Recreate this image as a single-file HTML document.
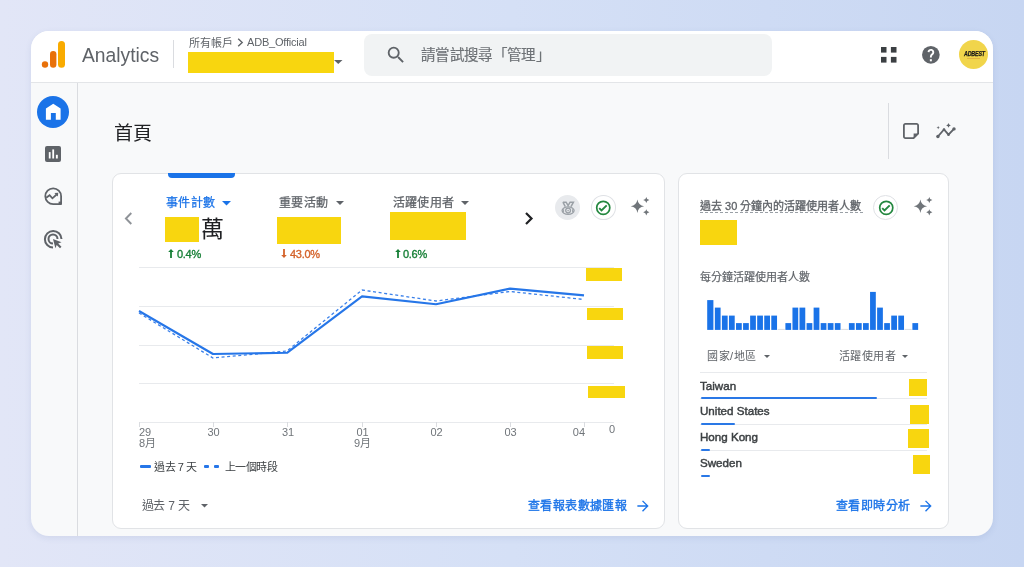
<!DOCTYPE html>
<html lang="zh-TW">
<head>
<meta charset="utf-8">
<style>
*{box-sizing:border-box;margin:0;padding:0}
html,body{width:1024px;height:567px;overflow:hidden}
body{font-family:"Liberation Sans",sans-serif;background:linear-gradient(90deg,#e2e6f7 0%,#d5e0f6 50%,#c7d6f2 100%);position:relative;color:#202124}
#frame{position:absolute;left:31px;top:31px;width:962px;height:505px;border-radius:18px;background:#f8f9fa;overflow:hidden;box-shadow:0 2px 6px rgba(60,80,140,.10)}
#hdr{position:absolute;left:0;top:0;width:962px;height:52px;background:#fff;border-bottom:1px solid #e3e5e8}
#side{position:absolute;left:0;top:52px;width:47px;height:454px;border-right:1px solid #dadce0}
.t{position:absolute;white-space:nowrap;line-height:1}
.yl{position:absolute;background:#f8d60f}
.card{position:absolute;background:#fff;border:1px solid #e1e3e6;border-radius:9px}
svg{position:absolute;overflow:visible}
</style>
</head>
<body>
<div id="root" style="position:absolute;left:0;top:0;width:1024px;height:567px;will-change:transform">
<div id="frame">
  <div id="hdr"></div>
  <div id="side"></div>
</div>

<!-- logo -->
<svg style="left:40px;top:40px" width="28" height="30" viewBox="0 0 28 30">
  <circle cx="5" cy="24.5" r="3.2" fill="#e8710a"/>
  <rect x="10" y="11" width="6.4" height="16.8" rx="3.2" fill="#e8710a"/>
  <rect x="18" y="1" width="7" height="26.8" rx="3.5" fill="#f9ab00"/>
</svg>
<div class="t" style="left:82px;top:46px;font-size:19.3px;color:#5f6368">Analytics</div>
<div style="position:absolute;left:173px;top:40px;width:1px;height:28px;background:#dadce0"></div>
<div class="t" style="left:189px;top:38px;font-size:11px;color:#5f6368">所有帳戶</div><svg style="left:236.5px;top:37.5px" width="7" height="9" viewBox="0 0 7 9"><path d="M1.2 0.8L5.2 4.5 1.2 8.2" fill="none" stroke="#5f6368" stroke-width="1.4"/></svg><div class="t" style="left:247px;top:37px;font-size:11px;letter-spacing:-0.2px;color:#5f6368">ADB_Official</div>
<div class="yl" style="left:188px;top:52px;width:146px;height:21px"></div>
<svg style="left:334px;top:60px" width="9" height="5"><path d="M0 0h8.5L4.25 4z" fill="#5f6368"/></svg>

<!-- search -->
<div style="position:absolute;left:364px;top:33.5px;width:408px;height:42.5px;border-radius:8px;background:#f1f3f4"></div>
<svg style="left:385.1px;top:43.9px" width="22" height="22" viewBox="0 0 24 24"><path fill="#5f6368" d="M15.5 14h-.79l-.28-.27A6.47 6.47 0 0 0 16 9.5 6.5 6.5 0 1 0 9.5 16c1.61 0 3.09-.59 4.23-1.57l.27.28v.79l5 4.99L20.49 19l-4.99-5zm-6 0C7.01 14 5 11.99 5 9.5S7.01 5 9.5 5 14 7.01 14 9.5 11.99 14 9.5 14z"/></svg>
<div class="t" style="left:421px;top:48px;font-size:14.5px;letter-spacing:0.35px;color:#6f7377;-webkit-text-stroke:0.2px #6f7377">請嘗試搜尋「管理」</div>

<!-- header right icons -->
<svg style="left:880.8px;top:46.8px" width="16" height="16" viewBox="0 0 16 16" fill="#3c4043">
  <rect x="0" y="0" width="5.5" height="5.6"/><rect x="9.9" y="0" width="5.6" height="5.6"/>
  <rect x="0" y="9.9" width="5.5" height="5.7"/><rect x="9.9" y="9.9" width="5.6" height="5.7"/>
</svg>
<svg style="left:922.2px;top:46px" width="18" height="18" viewBox="0 0 18 18"><circle cx="8.85" cy="8.85" r="8.85" fill="#5f6368"/><path d="M6.5 6.05A2.4 2.4 0 1 1 11.05 7.3C10.55 8.1 9.85 8.5 9.35 9.1 9 9.55 8.85 10 8.85 11.4" fill="none" stroke="#fff" stroke-width="1.9"/><rect x="7.85" y="13.2" width="2" height="2.1" fill="#fff"/></svg>
<div style="position:absolute;left:959px;top:40px;width:29px;height:29px;border-radius:50%;background:#f1d54b"></div>
<div class="t" style="left:963.8px;top:50.5px;font-size:6.5px;font-weight:bold;font-style:italic;color:#1a1a1a;-webkit-text-stroke:0.25px #1a1a1a;letter-spacing:-0.2px;transform:scaleX(0.82);transform-origin:0 0">ADBEST</div><div style="position:absolute;left:967px;top:58px;width:13px;height:0.6px;background:#d08a3a;opacity:.45"></div>

<!-- sidebar icons -->
<div style="position:absolute;left:37px;top:95.5px;width:32px;height:32px;border-radius:50%;background:#1a73e8"></div>
<svg style="left:45px;top:103px" width="17" height="17" viewBox="0 0 17 17"><path fill="#fff" d="M8.25 0.7L15.6 5.6V16.7H10.8V10H5.9V16.7H0.9V5.6z"/></svg>
<svg style="left:45px;top:146px" width="16" height="16" viewBox="0 0 16 16"><rect width="16" height="16" rx="2" fill="#5f6368"/><rect x="3.8" y="6.1" width="1.8" height="6.4" fill="#fff"/><rect x="7.3" y="3.4" width="1.8" height="9.1" fill="#fff"/><rect x="10.9" y="8.8" width="1.9" height="3.7" fill="#fff"/></svg>
<svg style="left:44px;top:186px" width="20" height="20" viewBox="0 0 20 20" fill="none" stroke="#5f6368" stroke-width="1.8">
  <path d="M17.1 18.1H9.3A7.9 7.9 0 1 1 17.1 10.2z" stroke-linejoin="round"/>
  <path d="M2.2 11.8L5.6 9.2 8.4 12.3 12.6 8.5" stroke-linejoin="miter"/>
  <path d="M10.4 7.1L14.2 6.8 13.9 10.6z" fill="#5f6368" stroke="none"/>
  <rect x="14.6" y="15.6" width="2.6" height="2.6" fill="#5f6368" stroke="none"/>
</svg>
<svg style="left:44px;top:230px" width="19" height="19" viewBox="0 0 19 19" fill="none" stroke="#5f6368" stroke-width="2">
  <path d="M9 17.5A8.3 8.3 0 1 1 17.5 9"/>
  <path d="M9 13.5A4.5 4.5 0 1 1 13.5 9"/>
  <path d="M9 9l8.5 3.2-3.3 1.3 3.3 3.3-1.5 1.5-3.3-3.3-1.3 3.3z" fill="#5f6368" stroke="none"/>
</svg>

<!-- page title -->
<div class="t" style="left:114px;top:124px;font-size:19px;color:#202124">首頁</div>
<div style="position:absolute;left:888px;top:103px;width:1px;height:56px;background:#dadce0"></div>
<svg style="left:902.8px;top:122.8px" width="16" height="16" viewBox="0 0 16 16"><path d="M2.4 0.9h11.2a1.5 1.5 0 0 1 1.5 1.5V10.6l-4.5 4.5H2.4A1.5 1.5 0 0 1 0.9 13.6V2.4A1.5 1.5 0 0 1 2.4 0.9z" fill="none" stroke="#5f6368" stroke-width="1.8"/><path d="M15.1 10.6h-4.5v4.5z" fill="#5f6368"/></svg>
<svg style="left:936px;top:122px" width="21" height="17" viewBox="0 0 21 17" fill="#5f6368">
  <path d="M1.9 14.5L8 7.5 12.5 12.7 18 6.9" fill="none" stroke="#5f6368" stroke-width="1.9" stroke-linejoin="round"/>
  <circle cx="1.9" cy="14.5" r="1.7"/><circle cx="8" cy="7.5" r="1.3"/><circle cx="12.5" cy="12.7" r="1.3"/><circle cx="18" cy="6.9" r="1.7"/>
  <path d="M12.5 1.1Q12.8 3.1 14.8 3.4 12.8 3.7 12.5 5.7 12.2 3.7 10.2 3.4 12.2 3.1 12.5 1.1z"/>
  <path d="M2.2 3.9Q2.45 5.35 3.9 5.6 2.45 5.85 2.2 7.3 1.95 5.85 0.5 5.6 1.95 5.35 2.2 3.9z"/>
</svg>

<!-- left card -->
<div class="card" style="left:112px;top:173px;width:553px;height:356px"></div>
<div style="position:absolute;left:168px;top:173px;width:67px;height:5px;background:#1a73e8;border-radius:0 0 4px 4px"></div>
<svg style="left:124px;top:212px" width="9" height="13" viewBox="0 0 9 13"><path d="M7.3 1L1.9 6.5 7.3 12" fill="none" stroke="#8f9398" stroke-width="1.9"/></svg>
<svg style="left:524px;top:212px" width="10" height="13" viewBox="0 0 10 13"><path d="M2 1l5.5 5.5L2 12" fill="none" stroke="#202124" stroke-width="2.2"/></svg>

<div class="t" style="left:166px;top:197px;font-size:12px;letter-spacing:0.3px;color:#1a73e8;-webkit-text-stroke:0.25px #1a73e8">事件計數</div>
<svg style="left:222px;top:201px" width="10" height="5"><path d="M0 0h9L4.5 4.5z" fill="#1a73e8"/></svg>
<div class="yl" style="left:165px;top:217px;width:34px;height:25px"></div>
<div class="t" style="left:201px;top:218px;font-size:23px;color:#202124">萬</div>
<svg style="left:168px;top:249px" width="6" height="9" viewBox="0 0 6 9"><path d="M3 0L5.8 3H3.9V9H2.1V3H0.2z" fill="#188038"/></svg><div class="t" style="left:177px;top:249px;font-size:11px;letter-spacing:-0.3px;color:#188038;-webkit-text-stroke:0.35px #188038">0.4%</div>

<div class="t" style="left:279px;top:197px;font-size:12px;letter-spacing:0.3px;color:#5f6368;-webkit-text-stroke:0.25px #5f6368">重要活動</div>
<svg style="left:336px;top:201px" width="10" height="5"><path d="M0 0h8L4 4z" fill="#5f6368"/></svg>
<div class="yl" style="left:277px;top:217px;width:64px;height:27px"></div>
<svg style="left:280.5px;top:248.5px" width="6" height="9" viewBox="0 0 6 9"><path d="M3 9L5.8 6H3.9V0H2.1V6H0.2z" fill="#d4632b"/></svg><div class="t" style="left:290px;top:249px;font-size:11px;letter-spacing:-0.3px;color:#d4632b;-webkit-text-stroke:0.35px #d4632b">43.0%</div>

<div class="t" style="left:393px;top:197px;font-size:12px;letter-spacing:0.2px;color:#5f6368;-webkit-text-stroke:0.25px #5f6368">活躍使用者</div>
<svg style="left:461px;top:201px" width="10" height="5"><path d="M0 0h8L4 4z" fill="#5f6368"/></svg>
<div class="yl" style="left:390px;top:212px;width:76px;height:28px"></div>
<svg style="left:394.5px;top:249px" width="6" height="9" viewBox="0 0 6 9"><path d="M3 0L5.8 3H3.9V9H2.1V3H0.2z" fill="#188038"/></svg><div class="t" style="left:403px;top:249px;font-size:11px;letter-spacing:-0.3px;color:#188038;-webkit-text-stroke:0.35px #188038">0.6%</div>

<div style="position:absolute;left:555px;top:195px;width:25px;height:25px;border-radius:50%;background:#e8eaed"></div>
<svg style="left:560.5px;top:200.5px" width="15" height="15" viewBox="0 0 15 15" fill="none" stroke="#9aa0a6" stroke-width="1.3"><path d="M1.9 1.2h3.2l2 3.4 2-3.4h3.3l-2.4 4.4M1.9 1.2l2.4 4.4" stroke-width="1.5"/><ellipse cx="7.1" cy="9.6" rx="6" ry="3.7"/><circle cx="7.1" cy="9.6" r="2.4"/><circle cx="7.1" cy="9.6" r="0.8" fill="#9aa0a6" stroke="none"/><path d="M2.6 8.2v2.8M11.6 8.2v2.8" stroke-width="1"/></svg>
<div style="position:absolute;left:590.8px;top:195.3px;width:24.8px;height:24.6px;border-radius:50%;background:#fff;border:1px solid #dfe1e5"></div>
<svg style="left:595px;top:200px" width="16" height="16" viewBox="0 0 16 16" fill="none" stroke="#23873f" stroke-width="1.7"><circle cx="8.25" cy="7.85" r="6.55"/><path d="M4.2 8.2l2.3 2.3 5.2-5.2" stroke-width="1.9"/></svg>
<svg style="left:631px;top:196.9px" width="20" height="20" viewBox="0 0 20 20" fill="#70757a"><path d="M6.40 2.50Q7.20 8.40 13.10 9.20Q7.20 10.00 6.40 15.90Q5.60 10.00 -0.30 9.20Q5.60 8.40 6.40 2.50ZM15.30 -0.10Q15.67 2.63 18.40 3.00Q15.67 3.37 15.30 6.10Q14.93 3.37 12.20 3.00Q14.93 2.63 15.30 -0.10ZM15.30 12.20Q15.67 14.93 18.40 15.30Q15.67 15.67 15.30 18.40Q14.93 15.67 12.20 15.30Q14.93 14.93 15.30 12.20Z"/></svg>

<!-- chart -->
<svg style="left:0;top:0" width="1024" height="567">
  <g stroke="#e8eaed" stroke-width="1">
    <line x1="139" y1="267.5" x2="614" y2="267.5"/>
    <line x1="139" y1="306.5" x2="614" y2="306.5"/>
    <line x1="139" y1="345.5" x2="614" y2="345.5"/>
    <line x1="139" y1="383.5" x2="614" y2="383.5"/>
    <line x1="139" y1="422.5" x2="614" y2="422.5"/>
  </g>
  <g stroke="#dadce0" stroke-width="1">
    <line x1="139.5" y1="422" x2="139.5" y2="427"/>
    <line x1="213.5" y1="422" x2="213.5" y2="427"/>
    <line x1="287.5" y1="422" x2="287.5" y2="427"/>
    <line x1="362.5" y1="422" x2="362.5" y2="427"/>
    <line x1="436.5" y1="422" x2="436.5" y2="427"/>
    <line x1="510.5" y1="422" x2="510.5" y2="427"/>
    <line x1="584.5" y1="422" x2="584.5" y2="427"/>
  </g>
  <polyline points="139,313 213,358 287,351 362,290 436,301 510,291.5 584,299.5" fill="none" stroke="#3a80ea" stroke-width="1.3" stroke-dasharray="3 2.6"/>
  <polyline points="139,311 213,354 287,352.8 362,296.4 436,304.2 510,288.6 584,295.4" fill="none" stroke="#2676e8" stroke-width="2.1" stroke-linejoin="round"/>
</svg>
<div class="yl" style="left:586px;top:268px;width:36px;height:13px"></div>
<div class="yl" style="left:587px;top:308px;width:36px;height:12px"></div>
<div class="yl" style="left:587px;top:346px;width:36px;height:13px"></div>
<div class="yl" style="left:588px;top:386px;width:37px;height:12px"></div>
<div class="t" style="left:609px;top:424px;font-size:11px;color:#70757a">0</div>

<div class="t" style="left:139px;top:427px;font-size:11px;color:#70757a;line-height:11px">29<br>8月</div>
<div class="t" style="left:207.5px;top:427px;font-size:11px;color:#70757a">30</div>
<div class="t" style="left:282px;top:427px;font-size:11px;color:#70757a">31</div>
<div class="t" style="left:354px;top:427px;font-size:11px;color:#70757a;line-height:11px;text-align:center">01<br>9月</div>
<div class="t" style="left:430.5px;top:427px;font-size:11px;color:#70757a">02</div>
<div class="t" style="left:504.5px;top:427px;font-size:11px;color:#70757a">03</div>
<div class="t" style="left:572.8px;top:427px;font-size:11px;color:#70757a">04</div>

<div style="position:absolute;left:139.5px;top:465px;width:11px;height:3px;background:#2676e8;border-radius:1px"></div>
<div class="t" style="left:154px;top:462px;font-size:11px;letter-spacing:-0.4px;color:#3c4043">過去 7 天</div>
<div style="position:absolute;left:203.5px;top:465px;width:5.5px;height:3px;background:#2676e8;border-radius:1px"></div>
<div style="position:absolute;left:213.5px;top:465px;width:5.5px;height:3px;background:#2676e8;border-radius:1px"></div>
<div class="t" style="left:224.5px;top:462px;font-size:11px;letter-spacing:-0.4px;color:#3c4043">上一個時段</div>

<div class="t" style="left:141.5px;top:500px;font-size:12px;letter-spacing:-0.2px;color:#5f6368">過去 7 天</div>
<svg style="left:201px;top:504px" width="8" height="4"><path d="M0 0h7L3.5 3.5z" fill="#5f6368"/></svg>
<div class="t" style="left:528px;top:500px;font-size:12px;letter-spacing:0.4px;color:#1a73e8;-webkit-text-stroke:0.35px #1a73e8">查看報表數據匯報</div>
<svg style="left:636.5px;top:499.5px" width="12" height="12" viewBox="0 0 16 16"><path d="M8 0.5L6.7 1.8l5.3 5.3H0.5v1.8H12l-5.3 5.3L8 15.5 15.5 8z" fill="#1a73e8"/></svg>

<!-- right card -->
<div class="card" style="left:678px;top:173px;width:271px;height:356px"></div>
<div class="t" style="left:700px;top:200.5px;font-size:11px;color:#5f6368;-webkit-text-stroke:0.3px #5f6368">過去 30 分鐘內的活躍使用者人數</div>
<div style="position:absolute;left:700px;top:212px;width:163px;height:0;border-top:1px dashed #9aa0a6"></div>
<div class="yl" style="left:700px;top:220px;width:37px;height:25px"></div>
<div style="position:absolute;left:873.4px;top:195.2px;width:24.9px;height:24.9px;border-radius:50%;background:#fff;border:1px solid #dfe1e5"></div>
<svg style="left:877.6px;top:199.8px" width="16" height="16" viewBox="0 0 16 16" fill="none" stroke="#23873f" stroke-width="1.7"><circle cx="8.25" cy="7.85" r="6.55"/><path d="M4.2 8.2l2.3 2.3 5.2-5.2" stroke-width="1.9"/></svg>
<svg style="left:913.7px;top:196.9px" width="20" height="20" viewBox="0 0 20 20" fill="#70757a"><path d="M6.40 2.50Q7.20 8.40 13.10 9.20Q7.20 10.00 6.40 15.90Q5.60 10.00 -0.30 9.20Q5.60 8.40 6.40 2.50ZM15.30 -0.10Q15.67 2.63 18.40 3.00Q15.67 3.37 15.30 6.10Q14.93 3.37 12.20 3.00Q14.93 2.63 15.30 -0.10ZM15.30 12.20Q15.67 14.93 18.40 15.30Q15.67 15.67 15.30 18.40Q14.93 15.67 12.20 15.30Q14.93 14.93 15.30 12.20Z"/></svg>
<div class="t" style="left:700px;top:272px;font-size:11px;color:#5f6368;-webkit-text-stroke:0.2px #5f6368">每分鐘活躍使用者人數</div>
<svg style="left:0;top:0" width="1024" height="567"><rect x="707.20" y="300.1" width="6.2" height="29.8" fill="#1a73e8"/><rect x="714.85" y="307.6" width="5.75" height="22.3" fill="#1a73e8"/><rect x="721.91" y="315.6" width="5.75" height="14.3" fill="#1a73e8"/><rect x="728.96" y="315.6" width="5.75" height="14.3" fill="#1a73e8"/><rect x="736.02" y="323.1" width="5.75" height="6.8" fill="#1a73e8"/><rect x="743.07" y="323.1" width="5.75" height="6.8" fill="#1a73e8"/><rect x="750.13" y="315.6" width="5.75" height="14.3" fill="#1a73e8"/><rect x="757.18" y="315.6" width="5.75" height="14.3" fill="#1a73e8"/><rect x="764.24" y="315.6" width="5.75" height="14.3" fill="#1a73e8"/><rect x="771.29" y="315.6" width="5.75" height="14.3" fill="#1a73e8"/><rect x="777.65" y="328.9" width="7.15" height="1" fill="#dadce0"/><rect x="785.40" y="323.1" width="5.75" height="6.8" fill="#1a73e8"/><rect x="792.46" y="307.6" width="5.75" height="22.3" fill="#1a73e8"/><rect x="799.51" y="307.6" width="5.75" height="22.3" fill="#1a73e8"/><rect x="806.57" y="323.1" width="5.75" height="6.8" fill="#1a73e8"/><rect x="813.62" y="307.6" width="5.75" height="22.3" fill="#1a73e8"/><rect x="820.68" y="323.1" width="5.75" height="6.8" fill="#1a73e8"/><rect x="827.73" y="323.1" width="5.75" height="6.8" fill="#1a73e8"/><rect x="834.79" y="323.1" width="5.75" height="6.8" fill="#1a73e8"/><rect x="841.14" y="328.9" width="7.15" height="1" fill="#dadce0"/><rect x="848.90" y="323.1" width="5.75" height="6.8" fill="#1a73e8"/><rect x="855.95" y="323.1" width="5.75" height="6.8" fill="#1a73e8"/><rect x="863.01" y="323.1" width="5.75" height="6.8" fill="#1a73e8"/><rect x="870.06" y="291.9" width="5.75" height="38.0" fill="#1a73e8"/><rect x="877.12" y="307.6" width="5.75" height="22.3" fill="#1a73e8"/><rect x="884.17" y="323.1" width="5.75" height="6.8" fill="#1a73e8"/><rect x="891.23" y="315.6" width="5.75" height="14.3" fill="#1a73e8"/><rect x="898.28" y="315.6" width="5.75" height="14.3" fill="#1a73e8"/><rect x="904.64" y="328.9" width="7.15" height="1" fill="#dadce0"/><rect x="912.39" y="323.1" width="5.75" height="6.8" fill="#1a73e8"/></svg>

<div class="t" style="left:707px;top:351px;font-size:11px;letter-spacing:0.5px;color:#5f6368">國家/地區</div>
<svg style="left:763.5px;top:355px" width="7" height="4"><path d="M0 0h6L3 3z" fill="#5f6368"/></svg>
<div class="t" style="left:839px;top:351px;font-size:11px;letter-spacing:0.4px;color:#5f6368">活躍使用者</div>
<svg style="left:901.5px;top:355px" width="7" height="4"><path d="M0 0h6L3 3z" fill="#5f6368"/></svg>
<div style="position:absolute;left:700px;top:372px;width:227px;height:1px;background:#e8eaed"></div>

<div class="t" style="left:700px;top:380px;font-size:11.6px;color:#3c4043;-webkit-text-stroke:0.45px #3c4043">Taiwan</div>
<div style="position:absolute;left:700px;top:398px;width:227px;height:1px;background:#e8eaed"></div>
<div style="position:absolute;left:701px;top:397px;width:176px;height:2.4px;background:#2a78e6;border-radius:1px"></div>
<div class="yl" style="left:909px;top:379px;width:18px;height:17px"></div>

<div class="t" style="left:700px;top:405px;font-size:11.6px;color:#3c4043;-webkit-text-stroke:0.45px #3c4043">United States</div>
<div style="position:absolute;left:700px;top:424px;width:227px;height:1px;background:#e8eaed"></div>
<div style="position:absolute;left:701px;top:423px;width:34px;height:2.4px;background:#2a78e6;border-radius:1px"></div>
<div class="yl" style="left:910px;top:405px;width:19px;height:19px"></div>

<div class="t" style="left:700px;top:431px;font-size:11.6px;color:#3c4043;-webkit-text-stroke:0.45px #3c4043">Hong Kong</div>
<div style="position:absolute;left:700px;top:450px;width:227px;height:1px;background:#e8eaed"></div>
<div style="position:absolute;left:701px;top:449px;width:8.7px;height:2.4px;background:#2a78e6;border-radius:1px"></div>
<div class="yl" style="left:908px;top:429px;width:21px;height:19px"></div>

<div class="t" style="left:700px;top:457px;font-size:11.6px;color:#3c4043;-webkit-text-stroke:0.45px #3c4043">Sweden</div>
<div style="position:absolute;left:701px;top:475px;width:8.7px;height:2.4px;background:#2a78e6;border-radius:1px"></div>
<div class="yl" style="left:913px;top:455px;width:17px;height:19px"></div>

<div class="t" style="left:836px;top:500px;font-size:12px;letter-spacing:0.4px;color:#1a73e8;-webkit-text-stroke:0.35px #1a73e8">查看即時分析</div>
<svg style="left:919.8px;top:499.5px" width="12" height="12" viewBox="0 0 16 16"><path d="M8 0.5L6.7 1.8l5.3 5.3H0.5v1.8H12l-5.3 5.3L8 15.5 15.5 8z" fill="#1a73e8"/></svg>
</div>
</body>
</html>
